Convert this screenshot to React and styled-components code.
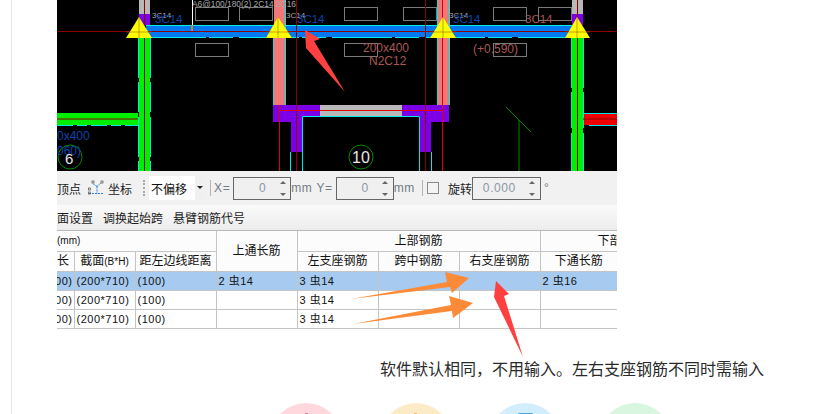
import React from "react";
import styled, { createGlobalStyle } from "styled-components";

const GlobalStyle = createGlobalStyle`
  html, body {
    margin: 0;
    height: 100%;
    overflow: hidden;
    background: #fff;
  }
  body {
    font-family: "Liberation Sans", "Noto Sans CJK SC", sans-serif;
    color: #111;
  }
`;

const GRAY_BOXES = [
  [195, 7], [239, 7], [195, 43], [344, 7], [344, 43], [403, 7], [493, 7], [493, 43], [538, 7],
];

// plan drawing of the beam, coordinates follow the page so x starts at 57
const CadDrawing = () => (
  <CadSvg viewBox="57 0 560 171">
    <rect x="57" y="0" width="560" height="171" fill="#000" />

    <rect x="57" y="113" width="81" height="12" fill="#00ee00" />
    <path d="M57 125.5H138" stroke="#00e8e8" strokeDasharray="16 4 10 4" />
    <rect x="583" y="113" width="34" height="12" fill="#f00000" />
    <path d="M583 113.5H617M589 125.5H617" stroke="#00e8e8" />

    <rect x="146" y="25" width="426" height="12" fill="#0078f0" />
    <path d="M146 25.5H572" stroke="#00e8e8" />
    <path d="M146 37.5H572" stroke="#00e8e8" strokeDasharray="60 3 24 6" />

    <rect x="139" y="0" width="11" height="14" fill="#b8b8b8" />
    <rect x="139" y="14" width="11" height="11" fill="#7b00e8" />
    <rect x="139" y="38" width="11" height="133" fill="#00ee00" />
    <path d="M138.5 38V171M150.5 38V171" stroke="#00e8e8" strokeDasharray="40 4 30 5" />

    <rect x="274" y="0" width="11" height="105" fill="#f07878" />
    <rect x="437" y="0" width="12" height="105" fill="#f07878" />
    <path d="M273.5 38V105M285.5 0V105M437.5 0V105M449.5 0V105" stroke="#00e8e8" />

    <rect x="572" y="0" width="11" height="14" fill="#b8b8b8" />
    <rect x="572" y="14" width="11" height="11" fill="#7b00e8" />
    <rect x="572" y="38" width="11" height="133" fill="#00ee00" />
    <path d="M571.5 38V171M583.5 38V171" stroke="#00e8e8" strokeDasharray="50 4 36 5" />

    <rect x="320" y="105" width="82" height="11" fill="#b8b8b8" />
    <path
      d="M273 105H320V116H302V116H302V152H291V122H273ZM402 105H449V122H431V152H420V116H402Z"
      fill="#7b00e8"
    />
    <path
      d="M302.5 171V116.5H419.5V171M290.5 152V171M431.5 152V171"
      stroke="#00e8e8"
      fill="none"
    />

    <path d="M192.5 0V25" stroke="#fff" />
    <rect x="191" y="25" width="2" height="6" fill="#c88040" />

    {GRAY_BOXES.map(([x, y]) => (
      <rect key={`${x}-${y}`} x={x + 0.5} y={y + 0.5} width="33" height="13" fill="none" stroke="#7a7a7a" />
    ))}

    <path d="M57 31.5H617M57 119H138M583 119H617" stroke="#8a0000" />
    <path d="M144.5 0V171M296.5 0V171M425.5 0V171M577.5 0V171" stroke="#8a0000" />
    <path d="M279.5 105V171M442.5 0V171M279 110.5H442" stroke="#e00000" />

    <path d="M139 17L152 38H126Z M278 17L292 38H266Z M443 17L456 38H430Z M577 17L590 38H565Z" fill="#ffff00" />
    <path d="M139 17V38M126 32H152M278 17V38M266 32H292M443 17V38M430 32H456M577 17V38M565 32H590" stroke="#a06000" strokeWidth="0.6" />

    <path d="M506 107L531 132M519 120V171" stroke="#008a00" fill="none" />
    <circle cx="70" cy="157" r="12" fill="none" stroke="#008a00" />
    <circle cx="361" cy="157" r="12" fill="none" stroke="#008a00" />

    <CadLabel x="192" y="7" fontSize="8.4" fill="#a8a8a8">A6@100/180(2) 2C14 2C16</CadLabel>
    <CadLabel x="152" y="18" fontSize="8" fill="#a8a8a8">3C14</CadLabel>
    <CadLabel x="286" y="18" fontSize="8" fill="#a8a8a8">3C14</CadLabel>
    <CadLabel x="449" y="18" fontSize="8" fill="#a8a8a8">3C14</CadLabel>
    <CadLabel x="155" y="23" fontSize="11.5" fill="#0c44b0">3C14</CadLabel>
    <CadLabel x="297" y="23" fontSize="11.5" fill="#0c44b0">3C14</CadLabel>
    <CadLabel x="453" y="23" fontSize="11.5" fill="#0c44b0">3C14</CadLabel>
    <CadLabel x="525" y="23" fontSize="11.5" fill="#a85858">3C14</CadLabel>
    <CadLabel x="363" y="52" fontSize="12" fill="#a85858">200x400</CadLabel>
    <CadLabel x="369" y="65" fontSize="12" fill="#a85858">N2C12</CadLabel>
    <CadLabel x="473" y="53" fontSize="12" fill="#a85858">(+0.590)</CadLabel>
    <CadLabel x="57" y="140" fontSize="12" fill="#0c44b0">0x400</CadLabel>
    <CadLabel x="57" y="155" fontSize="12" fill="#0c44b0">060)</CadLabel>
    <CadLabel x="65" y="164" fontSize="15" fill="#e8e8e8">6</CadLabel>
    <CadLabel x="352" y="163" fontSize="16" fill="#e8e8e8">10</CadLabel>
  </CadSvg>
);

const CoordIcon = () => (
  <svg width="17" height="16" viewBox="0 0 17 16">
    <path d="M1 13.5H16M9 6.5V13.5M9 6.5L4 3M9 6.5L13 3" stroke="#2f7fd0" fill="none" strokeDasharray="2 1" />
    <rect x="4" y="1" width="2" height="2" fill="none" stroke="#555" strokeWidth="0.7" />
    <rect x="13" y="1" width="2" height="2" fill="none" stroke="#555" strokeWidth="0.7" />
    <rect x="0.5" y="12" width="2" height="2" fill="none" stroke="#555" strokeWidth="0.7" />
    <rect x="0.5" y="8" width="2" height="2" fill="none" stroke="#555" strokeWidth="0.7" />
  </svg>
);

const NumberBox = ({ value, width }) => (
  <SpinBox $width={width}>
    <SpinValue>{value}</SpinValue>
    <SpinArrows>
      <SpinUp />
      <SpinDown />
    </SpinArrows>
  </SpinBox>
);

const Rebar = ({ text }) => {
  const [count, size] = text.split("虫");
  return (
    <>
      {count} 虫{size}
    </>
  );
};

const ROWS = [
  { top: "2虫14", left: "3虫14", bottom: "2虫16", selected: true },
  { left: "3虫14" },
  { left: "3虫14" },
];

export default function App() {
  return (
    <>
      <GlobalStyle />
      <Page>
        <Figure>
          <CadDrawing />
          <ToolBar>
            <ToolText>顶点</ToolText>
            <CoordWrap>
              <CoordIcon />
              <ToolText>坐标</ToolText>
            </CoordWrap>
            <Gripper />
            <SelectBox>
              <span>不偏移</span>
              <SelectArrow />
            </SelectBox>
            <Divider />
            <FieldLabel>X=</FieldLabel>
            <NumberBox value="0" width={58} />
            <FieldLabel>mm</FieldLabel>
            <FieldLabel $gap={1}>Y=</FieldLabel>
            <NumberBox value="0" width={58} />
            <FieldLabel>mm</FieldLabel>
            <Divider />
            <CheckBox />
            <ToolText $gap={9}>旋转</ToolText>
            <NumberBox value="0.000" width={69} $gap={4} />
            <FieldLabel $gap={3}>°</FieldLabel>
          </ToolBar>
          <SubBar>
            <ToolText>面设置</ToolText>
            <ToolText>调换起始跨</ToolText>
            <ToolText>悬臂钢筋代号</ToolText>
          </SubBar>
          <GridTable>
            <colgroup>
              <col width="17" />
              <col width="61" />
              <col width="81" />
              <col width="81" />
              <col width="81" />
              <col width="81" />
              <col width="81" />
              <col width="77" />
            </colgroup>
            <thead>
              <TopHeadRow>
                <HeadCell colSpan="3" $align="left">
                  <SmallLatin>(mm)</SmallLatin>
                </HeadCell>
                <HeadCell rowSpan="2">上通长筋</HeadCell>
                <HeadCell colSpan="3">上部钢筋</HeadCell>
                <HeadCell $align="left" $indent={57}>下部钢筋</HeadCell>
              </TopHeadRow>
              <tr>
                <HeadCell $align="left">长</HeadCell>
                <HeadCell>
                  截面<SmallLatin>(B*H)</SmallLatin>
                </HeadCell>
                <HeadCell>距左边线距离</HeadCell>
                <HeadCell>左支座钢筋</HeadCell>
                <HeadCell>跨中钢筋</HeadCell>
                <HeadCell>右支座钢筋</HeadCell>
                <HeadCell>下通长筋</HeadCell>
              </tr>
            </thead>
            <tbody>
              {ROWS.map((row, i) => (
                <DataRow key={i} $selected={row.selected}>
                  <DataCell>
                    <ClipEnd>(100)</ClipEnd>
                  </DataCell>
                  <DataCell>(200*710)</DataCell>
                  <DataCell>(100)</DataCell>
                  <DataCell>{row.top && <Rebar text={row.top} />}</DataCell>
                  <DataCell>{row.left && <Rebar text={row.left} />}</DataCell>
                  <DataCell />
                  <DataCell />
                  <DataCell>{row.bottom && <Rebar text={row.bottom} />}</DataCell>
                </DataRow>
              ))}
            </tbody>
          </GridTable>
          <ArrowLayer viewBox="57 0 560 360">
            <path d="M305 30L320 39L314 41L345 92L306 48Z" fill="#ff4040" />
            <path d="M496 281L509 294L504 296L523 357L494 297Z" fill="#ff4040" />
            <path d="M351 299L447 282L445 272L469 278L452 293L450 287Z" fill="#fb8b38" />
            <path d="M353 324L451 305L449 296L473 303L453 318L452 311Z" fill="#fb8b38" />
          </ArrowLayer>
        </Figure>
        <Caption>软件默认相同，不用输入。左右支座钢筋不同时需输入</Caption>
        <BadgeRow>
          <Badge $bg="#ffd8de">
            <BadgeDot $color="#f0506e" />
          </Badge>
          <Badge $bg="#fdebc8">
            <BadgeDot $color="#f0a830" />
          </Badge>
          <Badge $bg="#d2eefd">
            <BadgeBar />
          </Badge>
          <Badge $bg="#d8f6e0" />
        </BadgeRow>
      </Page>
    </>
  );
}

const Page = styled.div`
  box-sizing: border-box;
  height: 414px;
  margin-left: 11px;
  padding-left: 45px;
  border-left: 1px solid #e6e6e6;
  overflow: hidden;
`;

const Figure = styled.div`
  position: relative;
  width: 560px;
`;

const CadSvg = styled.svg`
  display: block;
  width: 560px;
  height: 171px;
`;

const CadLabel = styled.text`
  font-family: "Liberation Sans", sans-serif;
`;

const ToolBar = styled.div`
  display: flex;
  align-items: center;
  height: 34px;
  background: #f1f1f1;
  font-size: 12px;
  white-space: nowrap;
  overflow: hidden;
`;

const ToolText = styled.span`
  margin-left: ${(p) => p.$gap || 0}px;
  color: #1c1c1c;
  font-size: 12px;
`;

const CoordWrap = styled.div`
  display: flex;
  align-items: center;
  gap: 3px;
  margin-left: 7px;
`;

const Gripper = styled.div`
  width: 2px;
  height: 16px;
  margin-left: 11px;
  border-left: 2px dotted #a8a8a8;
`;

const SelectBox = styled.div`
  position: relative;
  box-sizing: border-box;
  display: flex;
  align-items: center;
  width: 57px;
  height: 24px;
  margin-left: 2px;
  padding-left: 2px;
  background: #fff;
  border-right: 11px solid #f0f0f0;
`;

const SelectArrow = styled.i`
  position: absolute;
  right: -8px;
  top: 10px;
  border-left: 3px solid transparent;
  border-right: 3px solid transparent;
  border-top: 3px solid #222;
`;

const Divider = styled.div`
  width: 1px;
  height: 16px;
  margin: 0 3px 0 4px;
  background: #b4b4b4;
`;

const FieldLabel = styled.span`
  margin: 0 3px 0 ${(p) => p.$gap || 0}px;
  color: #737b84;
  font-size: 12px;
  letter-spacing: 0.6px;
`;

const SpinBox = styled.div`
  box-sizing: border-box;
  display: flex;
  align-items: center;
  justify-content: flex-end;
  flex: none;
  width: ${(p) => p.$width}px;
  height: 23px;
  margin-left: ${(p) => p.$gap || 0}px;
  border: 1px solid #666;
  background: #f0f0f0;
`;

const SpinValue = styled.span`
  color: #8a97a6;
  font-size: 12px;
  letter-spacing: 0.6px;
  margin-right: 10px;
`;

const SpinArrows = styled.div`
  display: flex;
  flex-direction: column;
  align-items: center;
  justify-content: space-between;
  width: 13px;
  height: 15px;
  margin-right: 1px;
`;

const SpinUp = styled.i`
  border-left: 3px solid transparent;
  border-right: 3px solid transparent;
  border-bottom: 3px solid #666;
`;

const SpinDown = styled.i`
  border-left: 3px solid transparent;
  border-right: 3px solid transparent;
  border-top: 3px solid #666;
`;

const CheckBox = styled.div`
  box-sizing: border-box;
  width: 12px;
  height: 12px;
  margin-left: 1px;
  border: 1px solid #8a8a8a;
  background: #f4f4f4;
`;

const SubBar = styled.div`
  display: flex;
  align-items: center;
  gap: 10px;
  box-sizing: border-box;
  height: 26px;
  background: linear-gradient(#fafafa, #ececec);
  border-bottom: 1px solid #b8b8b8;
  white-space: nowrap;
`;

const GridTable = styled.table`
  width: 560px;
  table-layout: fixed;
  border-collapse: collapse;
  background: #fff;
  font-size: 12px;
`;

const TopHeadRow = styled.tr`
  height: 20px;
`;

const HeadCell = styled.th`
  height: 19px;
  padding: 0 0 0 ${(p) => p.$indent || 0}px;
  background: #fcfcfc;
  border: 1px solid #c4c4c4;
  border-top: 0;
  border-left: 0;
  font-weight: 400;
  font-size: 12px;
  line-height: 16px;
  text-align: ${(p) => p.$align || "center"};
  white-space: nowrap;
  overflow: hidden;

  &:last-child {
    border-right: 0;
  }
`;

const SmallLatin = styled.span`
  font-size: 10px;
`;

const DataRow = styled.tr`
  background: ${(p) => (p.$selected ? "#a6caf0" : "#fff")};
`;

const DataCell = styled.td`
  height: 18px;
  padding: 0 0 0 2px;
  border: 1px solid #c4c4c4;
  border-top: 0;
  border-left: 0;
  font-size: 11px;
  letter-spacing: 0.5px;
  line-height: 16px;
  white-space: nowrap;
  overflow: hidden;

  &:last-child {
    border-right: 0;
  }
`;

const ClipEnd = styled.div`
  display: flex;
  justify-content: flex-end;
  margin-left: -2px;
  padding-right: 1px;
  overflow: hidden;
`;

const ArrowLayer = styled.svg`
  position: absolute;
  left: 0;
  top: 0;
  width: 560px;
  height: 360px;
  pointer-events: none;
`;

const Caption = styled.p`
  margin: 33px 0 0 323px;
  width: 400px;
  color: #2a2a2a;
  font-size: 16px;
  line-height: 16px;
  white-space: nowrap;
`;

const BadgeRow = styled.div`
  display: flex;
  gap: 37.5px;
  margin: 25px 0 0 213px;
`;

const Badge = styled.div`
  display: flex;
  justify-content: center;
  flex: none;
  box-sizing: border-box;
  width: 72px;
  height: 72px;
  padding-top: 10px;
  border-radius: 50%;
  background: ${(p) => p.$bg};
`;

const BadgeDot = styled.i`
  box-sizing: border-box;
  width: 5px;
  height: 5px;
  border: 1px solid ${(p) => p.$color};
  border-radius: 50%;
`;

const BadgeBar = styled.i`
  width: 15px;
  height: 5px;
  background: #48a8e8;
  border-radius: 1px;
`;
